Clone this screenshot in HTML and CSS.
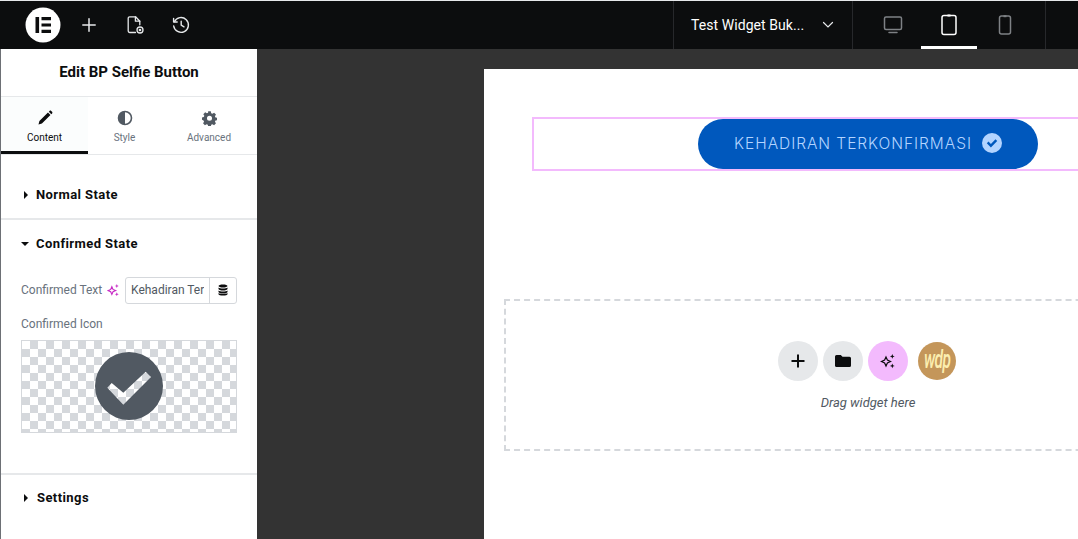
FILE: index.html
```html
<!DOCTYPE html>
<html lang="en">
<head>
<meta charset="utf-8">
<title>Edit BP Selfie Button</title>
<link rel="stylesheet" href="styles.css">
</head>
<body>
<header class="topbar">
  <div class="top-left">
    <div class="logo"><svg width="36" height="36" viewBox="0 0 36 36"><circle cx="18" cy="18" r="17.5" fill="#fff"/><path fill="#0c0d0e" d="M10.5 10h3.600v16h-3.600zM16.500 10H26v3.200h-9.500zM16.500 16.400H26v3.200h-9.500zM16.500 22.800H26V26h-9.500z"/></svg></div>
    <button class="tool"><svg width="20" height="20" viewBox="0 0 20 20" fill="none" stroke="#e6e8ea" stroke-width="1.500" stroke-linecap="round"><path d="M10 3.800v12.400M3.800 10h12.400"/></svg></button>
    <button class="tool"><svg width="20" height="20" viewBox="0 0 20 20" fill="none" stroke="#e6e8ea" stroke-width="1.300" stroke-linecap="round" stroke-linejoin="round"><path d="M10.500 17.500H4.600a1.400 1.400 0 0 1-1.400-1.400V3.200a1.400 1.400 0 0 1 1.400-1.400h6l4.200 4.400v3.600"/><path d="M10.400 1.800v4.400h4.400"/><circle cx="15" cy="15" r="3"/><circle cx="15" cy="15" r=".7"/></svg></button>
    <button class="tool"><svg width="20" height="20" viewBox="0 0 20 20" fill="none" stroke="#e6e8ea" stroke-width="1.400" stroke-linecap="round" stroke-linejoin="round"><path d="M3.400 6.600A7.400 7.400 0 1 1 2.700 11"/><path d="M2.600 3.400v3.600h3.600"/><path d="M10.200 6.200v4l2.800 1.600"/></svg></button>
  </div>
  <div class="top-right">
    <div class="doc"><span class="doc-name">Test Widget Buk...</span><svg width="12" height="8" viewBox="0 0 12 8" fill="none" stroke="#e6e8ea" stroke-width="1.200" stroke-linecap="round"><path d="M1.500 1.500l4.500 4.500 4.500-4.500"/></svg></div>
    <div class="devices">
      <button class="device"><svg width="20" height="20" viewBox="0 0 20 20" fill="none" stroke="#7e8185" stroke-width="1.500" stroke-linecap="round"><rect x="1.500" y="2" width="17" height="12.500" rx="1.500"/><path d="M6 17.500h8"/></svg></button>
      <button class="device active"><svg width="20" height="22" viewBox="0 0 20 22" fill="none" stroke="#fff" stroke-width="1.500"><rect x="3" y="1.500" width="14" height="19" rx="2"/><path d="M8.500 1.500h3" stroke-width="2"/></svg></button>
      <button class="device"><svg width="16" height="20" viewBox="0 0 16 20" fill="none" stroke="#7e8185" stroke-width="1.500"><rect x="2.500" y="1" width="11" height="18" rx="2"/><path d="M6.500 1.200h3" stroke-width="2"/></svg></button>
    </div>
  </div>
</header>
<div class="workspace">
  <aside class="panel">
    <h1 class="panel-title">Edit BP Selfie Button</h1>
    <nav class="tabs">
      <div class="tab tab-active"><svg width="16" height="16" viewBox="0 0 14 14"><path fill="#0c0d0e" d="M9.600 2.200l2.200 2.200-7.500 7.500-3 .8.8-3zM10.300 1.500l.7-.7c.4-.4 1-.4 1.400 0l.8.8c.4.4.4 1 0 1.400l-.7.7z"/></svg><span>Content</span></div>
      <div class="tab tab-style"><svg width="16" height="16" viewBox="0 0 16 16"><circle cx="8" cy="8" r="6.500" fill="#fff" stroke="#515962" stroke-width="1.600"/><path fill="#515962" d="M8 1.500a6.500 6.500 0 0 0 0 13z"/></svg><span>Style</span></div>
      <div class="tab tab-adv"><svg width="15" height="16" viewBox="0 0 16 16"><path fill="#515962" fill-rule="evenodd" d="M6.600.8h2.800l.4 2 1.300.6 1.800-1.100 2 2-1.100 1.800.6 1.300 1.900.4v2.400l-1.900.5-.6 1.300 1.100 1.700-2 2-1.800-1.100-1.300.6-.4 2H6.600l-.4-2-1.300-.6-1.800 1.100-2-2 1.100-1.700-.6-1.300L0 9.800V7.400l1.900-.4.600-1.300-1.100-1.800 2-2 1.800 1.100 1.300-.6zM8 5.600a2.700 2.700 0 1 0 0 5.400 2.700 2.700 0 0 0 0-5.400z"/></svg><span>Advanced</span></div>
    </nav>
    <section class="section section-normal">
      <h2 class="section-head"><span class="caret caret-right"></span>Normal State</h2>
    </section>
    <section class="section section-confirmed">
      <h2 class="section-head"><span class="caret caret-down"></span>Confirmed State</h2>
      <div class="field">
        <label class="field-label" for="confirmed-text">Confirmed Text</label>
        <svg class="spark" width="12" height="12" viewBox=".8 .8 10.400 10.400" fill="none"><path d="M5 3.200l1 2.300 2.300 1-2.300 1-1 2.300-1-2.300-2.300-1 2.300-1z" stroke="#c72bc5" stroke-width="1"/><path d="M9.300 .8l.5 1.200 1.200.5-1.200.5-.5 1.200-.5-1.200-1.200-.5 1.200-.5zM9.300 8l.5 1.200 1.200.5-1.200.5-.5 1.200-.5-1.200-1.200-.5 1.200-.5z" fill="#c72bc5"/></svg>
        <div class="input-group"><input id="confirmed-text" class="input-text" type="text" value="Kehadiran Terkonfirmasi" readonly><span class="input-btn"><svg width="10" height="12" viewBox="0 0 10 12"><path fill="#0c0d0e" d="M5 .5c2.500 0 4.500.7 4.500 1.500S7.500 3.500 5 3.500.5 2.800.5 2 2.500.5 5 .5zM.5 3.600C1.300 4.300 3 4.600 5 4.600s3.700-.3 4.500-1V5C9.500 5.800 7.500 6.500 5 6.500S.5 5.800.5 5zM.5 6.600c.8.700 2.500 1 4.500 1s3.700-.3 4.500-1V8c0 .8-2 1.500-4.500 1.500S.5 8.800.5 8zM.5 9.100c.8.700 2.500 1 4.500 1s3.700-.3 4.500-1v1.100c0 .8-2 1.300-4.500 1.300S.5 11 .5 10.200z"/></svg></span></div>
      </div>
      <div class="icon-label">Confirmed Icon</div>
      <div class="media"><svg width="68" height="68" viewBox="0 0 68 68"><path fill="#515962" fill-rule="evenodd" d="M34 0a34 34 0 1 0 0 68 34 34 0 0 0 0-68zM12.300 35.700L16.700 31l11.600 9.700 22.400-21 5.300 5.300-27.700 27.700z"/></svg></div>
    </section>
    <section class="section section-settings">
      <h2 class="section-head"><span class="caret caret-right"></span>Settings</h2>
    </section>
  </aside>
  <main class="preview">
    <div class="canvas">
      <div class="widget">
        <a class="confirm-btn"><span>KEHADIRAN TERKONFIRMASI</span><svg width="20" height="20" viewBox="0 0 20 20"><circle cx="10" cy="10" r="10" fill="#b3d4ff"/><path d="M4.800 10.300l1.700-1.700 2.400 2.400 4.600-4.800 1.700 1.700-6.300 6.500z" fill="#0058bd"/></svg></a>
      </div>
      <div class="dropzone">
        <div class="drop-actions">
          <span class="round grey"><svg width="14" height="14" viewBox="0 0 14 14" stroke="#0c0d0e" stroke-width="2"><path d="M7 .5v13M.5 7h13"/></svg></span>
          <span class="round grey"><svg width="16" height="14" viewBox="0 0 16 14"><path fill="#0c0d0e" d="M1.500 1h4.300l1.700 1.700h7a1.500 1.500 0 0 1 1.500 1.500v7.300a1.500 1.500 0 0 1-1.500 1.500h-13A1.500 1.500 0 0 1 0 12V2.500A1.500 1.500 0 0 1 1.500 1z"/></svg></span>
          <span class="round pink"><svg width="16" height="16" viewBox="0 0 16 16" fill="none"><path d="M6 4l1.400 3.100 3.100 1.400-3.100 1.400L6 13l-1.400-3.100L1.500 8.500l3.100-1.400z" stroke="#0c0d0e" stroke-width="1.200"/><path d="M12.300 1l.7 1.700 1.700.7-1.700.7-.7 1.700-.7-1.700-1.700-.7 1.700-.7zM12.300 10.500l.7 1.700 1.700.7-1.700.7-.7 1.700-.7-1.700-1.700-.7 1.700-.7z" fill="#0c0d0e"/></svg></span>
          <span class="round wdp"><span class="wdp-text">wdp</span></span>
        </div>
        <div class="drop-text">Drag widget here</div>
      </div>
    </div>
  </main>
</div>
</body>
</html>
```
FILE: styles.css
```css
* { box-sizing: border-box; }
html, body { margin: 0; height: 100%; overflow: hidden; }
body {
  width: 1078px;
  height: 539px;
  font-family: Roboto, "Liberation Sans", sans-serif;
  background: #fff;
  border-top: 1px solid #e6e8ea;
  display: flex;
  flex-direction: column;
}
button { border: 0; background: none; padding: 0; display: flex; align-items: center; justify-content: center; }

.topbar {
  height: 48px;
  flex: none;
  background: #0c0d0e;
  display: flex;
  justify-content: space-between;
}
.top-left { display: flex; align-items: center; padding-left: 25px; }
.logo { width: 36px; height: 36px; margin-right: 5px; }
.logo svg { display: block; }
.tool { width: 46px; height: 48px; }
.top-right { display: flex; margin-right: 32px; }
.doc {
  width: 180px;
  border-left: 1px solid #27282b;
  border-right: 1px solid #27282b;
  display: flex;
  align-items: center;
  padding-left: 17px;
  gap: 17px;
  color: #fff;
  font-size: 14px;
  letter-spacing: .07px;
}
.doc-name { width: 114px; white-space: nowrap; }
.devices { display: flex; width: 193px; padding-left: 12px; border-right: 1px solid #27282b; }
.device { width: 56px; height: 48px; }
.device.active { border-bottom: 3px solid #fff; padding-top: 2px; }

.workspace { flex: 1; display: flex; min-height: 0; }
.panel {
  width: 257px;
  flex: none;
  background: #fff;
  border-left: 1px solid #6d7075;
  display: flex;
  flex-direction: column;
}
.panel-title {
  margin: 0;
  height: 48px;
  font-size: 15px;
  font-weight: 700;
  color: #0c0d0e;
  text-align: center;
  line-height: 46px;
  border-bottom: 1px solid #e6e8ea;
}
.tabs { display: flex; height: 58px; border-bottom: 1px solid #e6e8ea; flex: none; }
.tab {
  display: flex;
  flex-direction: column;
  align-items: center;
  font-size: 10px;
  line-height: 12px;
  color: #69727d;
  padding-top: 13px;
  gap: 6px;
  height: 57px;
}
.tab svg { display: block; }
.tab-active { width: 87px; color: #0c0d0e; background: #fbfdfd; border-bottom: 3px solid #0c0d0e; }
.tab-style { width: 73px; }
.tab-adv { width: 96px; }
.section { flex: none; border-bottom: 2px solid #e6e8ea; }
.section-normal { height: 65px; padding-top: 31px; }
.section-confirmed { height: 255px; padding-top: 15px; padding-left: 20px; }
.section-settings { border-bottom: 0; padding-top: 14px; }
.section-head {
  margin: 0;
  font-size: 13px;
  line-height: 18px;
  letter-spacing: .42px;
  font-weight: 700;
  color: #0c0d0e;
  display: flex;
  align-items: center;
  font-family: Roboto, sans-serif;
}
.section-normal .section-head, .section-settings .section-head { padding-left: 23px; }
.caret { width: 0; height: 0; flex: none; margin-right: 9px; border-style: solid; border-color: transparent; }
.caret-right { border-width: 4px 0 4px 4px; border-left-color: #0c0d0e; }
.caret-down { border-width: 4px 4px 0 4px; border-top-color: #0c0d0e; margin-right: 7px; }
.section-normal .caret { margin-right: 8px; }
.field { display: flex; align-items: center; margin-top: 23px; height: 28px; }
.field-label { font-size: 12px; color: #69727d; width: 86px; }
.spark { flex: none; margin-right: 6px; }
.input-group {
  width: 112px;
  height: 27px;
  border: 1px solid #d5d8dc;
  border-radius: 3px;
  display: flex;
  align-items: center;
}
.input-text {
  width: 83px;
  height: 25px;
  border: 0;
  padding: 0 5px;
  outline: 0;
  background: none;
  font: 12px Roboto, sans-serif;
  color: #515962;
}
.input-btn { flex: 1; height: 100%; border-left: 1px solid #d5d8dc; display: flex; align-items: center; justify-content: center; }
.icon-label { margin-top: 13px; font-size: 12px; line-height: 14px; color: #69727d; }
.media {
  margin-top: 9px;
  width: 216px;
  height: 93px;
  padding-bottom: 2px;
  border: 1px solid #d5d8dc;
  background-color: #fff;
  background-image: conic-gradient(#d5d8dc 25%, #fff 0 50%, #d5d8dc 0 75%, #fff 0);
  background-size: 16px 16px;
  display: flex;
  align-items: center;
  justify-content: center;
}
.media svg { display: block; }

.preview { flex: 1; min-width: 0; background: #333; padding: 20px 0 0 227px; overflow: hidden; }
.canvas { width: 768px; height: 100%; background: #fff; padding: 48px 20px 0; }
.widget {
  margin: 0 28px;
  height: 54px;
  border: 2px solid #f3bafd;
  display: flex;
  justify-content: center;
}
.confirm-btn {
  width: 340px;
  height: 50px;
  padding-bottom: 2px;
  background: #0058bd;
  border-radius: 25px;
  color: #b3d4ff;
  display: flex;
  align-items: center;
  justify-content: center;
  gap: 10px;
  font-family: Inter, sans-serif;
  font-weight: 300;
  font-size: 15.500px;
  letter-spacing: .95px;
  white-space: nowrap;
}
.dropzone {
  margin-top: 128px;
  height: 152px;
  border: 2px dashed #d5d8dc;
  display: flex;
  flex-direction: column;
  align-items: center;
  padding-top: 40px;
}
.drop-actions { display: flex; align-items: center; gap: 5px; margin-right: 2px; }
.round { width: 40px; height: 40px; border-radius: 50%; display: flex; align-items: center; justify-content: center; }
.grey { background: #e6e8ea; }
.pink { background: #f3bafd; }
.wdp {
  width: 38px;
  height: 38px;
  margin-left: 5px;
  background: #c4965a;
  color: #fbeeb0;
  overflow: hidden;
}
.wdp-text {
  display: block;
  font-family: Roboto, sans-serif;
  font-style: italic;
  font-weight: 500;
  font-size: 25px;
  line-height: 30px;
  margin-top: -3px;
  letter-spacing: -1px;
  transform: scaleX(.62);
}
.drop-text { margin-top: 14px; font-size: 13px; font-style: italic; color: #515962; line-height: 16px; }
```
